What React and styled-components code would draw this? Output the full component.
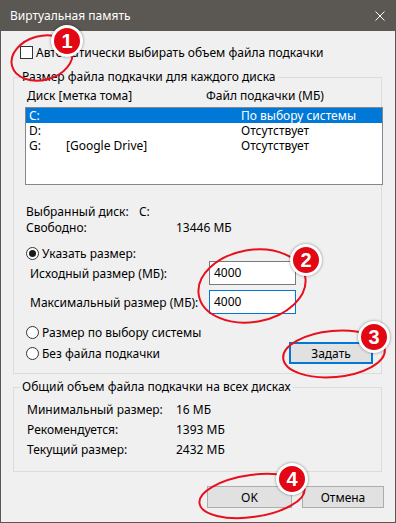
import React from 'react';
import styled, { createGlobalStyle } from 'styled-components';

const GlobalStyle = createGlobalStyle`
  html, body {
    margin: 0;
    padding: 0;
    background: #f0f0f0;
  }
  * {
    box-sizing: border-box;
  }
`;

const Window = styled.div`
  position: relative;
  width: 396px;
  height: 523px;
  background: #f0f0f0;
  border: 1px solid #5b5753;
  border-top: none;
  font-family: 'Noto Sans', 'Segoe UI', sans-serif;
  font-size: 12px;
  color: #000;
  overflow: hidden;
`;

const TitleBar = styled.div`
  height: 31px;
  margin: 0 -1px;
  background: #5b5753;
  color: #fff;
  display: flex;
  align-items: center;
  justify-content: space-between;
  padding: 0 10px 0 10px;
  font-size: 12px;
`;

const CloseIcon = styled.svg`
  width: 10px;
  height: 10px;
  margin-right: 1px;
`;

const CheckRow = styled.label`
  display: flex;
  align-items: center;
  height: 16px;
  margin: 13px 0 0 19px;
  gap: 3px;
`;

const CheckBox = styled.span`
  width: 13px;
  height: 13px;
  border: 1px solid #333;
  background: #fff;
`;

const Group = styled.div`
  position: relative;
  margin: ${({ $top }) => $top}px 0 0 12px;
  width: 369px;
  border: 1px solid #dcdcdc;
  padding: ${({ $pad }) => $pad};
`;

const Legend = styled.span`
  position: absolute;
  left: 6px;
  top: -9px;
  padding: 0 2px;
  background: #f0f0f0;
  line-height: 16px;
`;

const Header = styled.div`
  display: grid;
  grid-template-columns: 179px auto;
  height: 16px;
  line-height: 16px;
  padding-left: 13px;
`;

const ListBox = styled.div`
  margin: 3px 0 0 11px;
  width: 358px;
  height: 78px;
  border: 1px solid #828790;
  background: #fff;
`;

const ListRow = styled.div`
  display: grid;
  grid-template-columns: 37px 175px auto;
  height: 15px;
  line-height: 15px;
  padding-left: 3px;
  background: ${({ $selected }) => ($selected ? '#0078d7' : 'transparent')};
  color: ${({ $selected }) => ($selected ? '#fff' : '#000')};
`;

const InfoRow = styled.div`
  display: grid;
  grid-template-columns: ${({ $cols }) => $cols};
  height: ${({ $h }) => $h || 16}px;
  line-height: ${({ $h }) => $h || 16}px;
  padding-left: ${({ $indent }) => $indent}px;
  margin-top: ${({ $top }) => $top || 0}px;
`;

const RadioRow = styled.label`
  display: flex;
  align-items: center;
  gap: 3px;
  height: 16px;
  margin-top: ${({ $top }) => $top || 0}px;
  padding-left: 12px;
`;

const Radio = styled.span`
  width: 13px;
  height: 13px;
  border-radius: 50%;
  border: 1px solid #333;
  background: #fff;
  display: flex;
  align-items: center;
  justify-content: center;

  &::after {
    content: '';
    width: 7px;
    height: 7px;
    border-radius: 50%;
    background: ${({ $checked }) => ($checked ? '#1a1a1a' : 'transparent')};
  }
`;

const FieldRow = styled.div`
  display: flex;
  align-items: center;
  justify-content: space-between;
  height: 24px;
  margin-top: ${({ $top }) => $top || 0}px;
  padding: 0 85px 0 16px;
`;

const Input = styled.div`
  width: 87px;
  height: 24px;
  border: 1px solid ${({ $focused }) => ($focused ? '#0078d7' : '#7a7a7a')};
  background: #fff;
  padding-left: 4px;
  line-height: 22px;
`;

const ActionRow = styled.div`
  display: flex;
  align-items: center;
  justify-content: space-between;
  height: 22px;
  margin-top: 2px;
  padding-right: 8px;
`;

const Button = styled.div`
  width: ${({ $w }) => $w}px;
  height: 22px;
  display: flex;
  align-items: center;
  justify-content: center;
  background: #e1e1e1;
  border: ${({ $default }) => ($default ? '2px solid #0078d7' : '1px solid #adadad')};
`;

const Footer = styled.div`
  display: flex;
  justify-content: flex-end;
  gap: 10px;
  margin: 14px 11px 0 0;
`;

const Overlay = styled.svg`
  position: absolute;
  inset: 0;
  width: 396px;
  height: 523px;
  pointer-events: none;
`;

const Badge = styled.div`
  position: absolute;
  left: ${({ $x }) => $x - 16}px;
  top: ${({ $y }) => $y - 16}px;
  width: 32px;
  height: 32px;
  border-radius: 50%;
  background: #e30613;
  border: 3px solid #fff;
  box-shadow: 0 0 3px rgba(0, 0, 0, 0.45);
  color: #fff;
  font-family: 'Liberation Sans', Arial, sans-serif;
  font-weight: bold;
  font-size: 20px;
  display: flex;
  align-items: center;
  justify-content: center;
`;

const drives = [
  { letter: 'C:', label: '', size: 'По выбору системы', selected: true },
  { letter: 'D:', label: '', size: 'Отсутствует' },
  { letter: 'G:', label: '[Google Drive]', size: 'Отсутствует' },
];

const totals = [
  ['Минимальный размер:', '16 МБ'],
  ['Рекомендуется:', '1393 МБ'],
  ['Текущий размер:', '2432 МБ'],
];

const marks = [
  { cx: 41, cy: 58, rx: 31, ry: 22, rot: -15 },
  { cx: 251, cy: 286, rx: 54, ry: 36, rot: -10 },
  { cx: 333, cy: 354, rx: 51, ry: 23, rot: -5 },
  { cx: 251, cy: 496, rx: 53, ry: 21, rot: -8 },
];

const badges = [
  { n: 1, x: 66, y: 41 },
  { n: 2, x: 305, y: 260 },
  { n: 3, x: 373, y: 337 },
  { n: 4, x: 291, y: 479 },
];

const App = () => (
  <>
    <GlobalStyle />
    <Window>
      <TitleBar>
        <span>Виртуальная память</span>
        <CloseIcon viewBox="0 0 10 10">
          <path d="M0.5 0.5 L9.5 9.5 M9.5 0.5 L0.5 9.5" stroke="#fff" strokeWidth="1" />
        </CloseIcon>
      </TitleBar>

      <CheckRow>
        <CheckBox />
        <span>Автоматически выбирать объем файла подкачки</span>
      </CheckRow>

      <Group $top={17} $pad="10px 0 9px 0">
        <Legend>Размер файла подкачки для каждого диска</Legend>
        <Header>
          <span>Диск [метка тома]</span>
          <span>Файл подкачки (МБ)</span>
        </Header>
        <ListBox>
          {drives.map((d) => (
            <ListRow key={d.letter} $selected={d.selected}>
              <span>{d.letter}</span>
              <span>{d.label}</span>
              <span>{d.size}</span>
            </ListRow>
          ))}
        </ListBox>

        <InfoRow $cols="113px auto" $indent={12} $top={19}>
          <span>Выбранный диск:</span>
          <span>C:</span>
        </InfoRow>
        <InfoRow $cols="150px auto" $indent={12}>
          <span>Свободно:</span>
          <span>13446 МБ</span>
        </InfoRow>

        <RadioRow $top={9}>
          <Radio $checked />
          <span>Указать размер:</span>
        </RadioRow>
        <FieldRow>
          <span>Исходный размер (МБ):</span>
          <Input>4000</Input>
        </FieldRow>
        <FieldRow $top={5}>
          <span>Максимальный размер (МБ):</span>
          <Input $focused>4000</Input>
        </FieldRow>

        <RadioRow $top={10}>
          <Radio />
          <span>Размер по выбору системы</span>
        </RadioRow>
        <ActionRow>
          <RadioRow>
            <Radio />
            <span>Без файла подкачки</span>
          </RadioRow>
          <Button $w={84} $default>Задать</Button>
        </ActionRow>
      </Group>

      <Group $top={13} $pad="12px 0 11px 0">
        <Legend>Общий объем файла подкачки на всех дисках</Legend>
        {totals.map(([k, v]) => (
          <InfoRow key={k} $cols="149px auto" $indent={13} $h={20}>
            <span>{k}</span>
            <span>{v}</span>
          </InfoRow>
        ))}
      </Group>

      <Footer>
        <Button $w={85}>OK</Button>
        <Button $w={82}>Отмена</Button>
      </Footer>

      <Overlay viewBox="0 0 396 523">
        {marks.map((m, i) => (
          <ellipse
            key={i}
            cx={m.cx}
            cy={m.cy}
            rx={m.rx}
            ry={m.ry}
            transform={`rotate(${m.rot} ${m.cx} ${m.cy})`}
            fill="none"
            stroke="#e8101c"
            strokeWidth="2"
          />
        ))}
      </Overlay>
      {badges.map((b) => (
        <Badge key={b.n} $x={b.x} $y={b.y}>
          {b.n}
        </Badge>
      ))}
    </Window>
  </>
);

export default App;
